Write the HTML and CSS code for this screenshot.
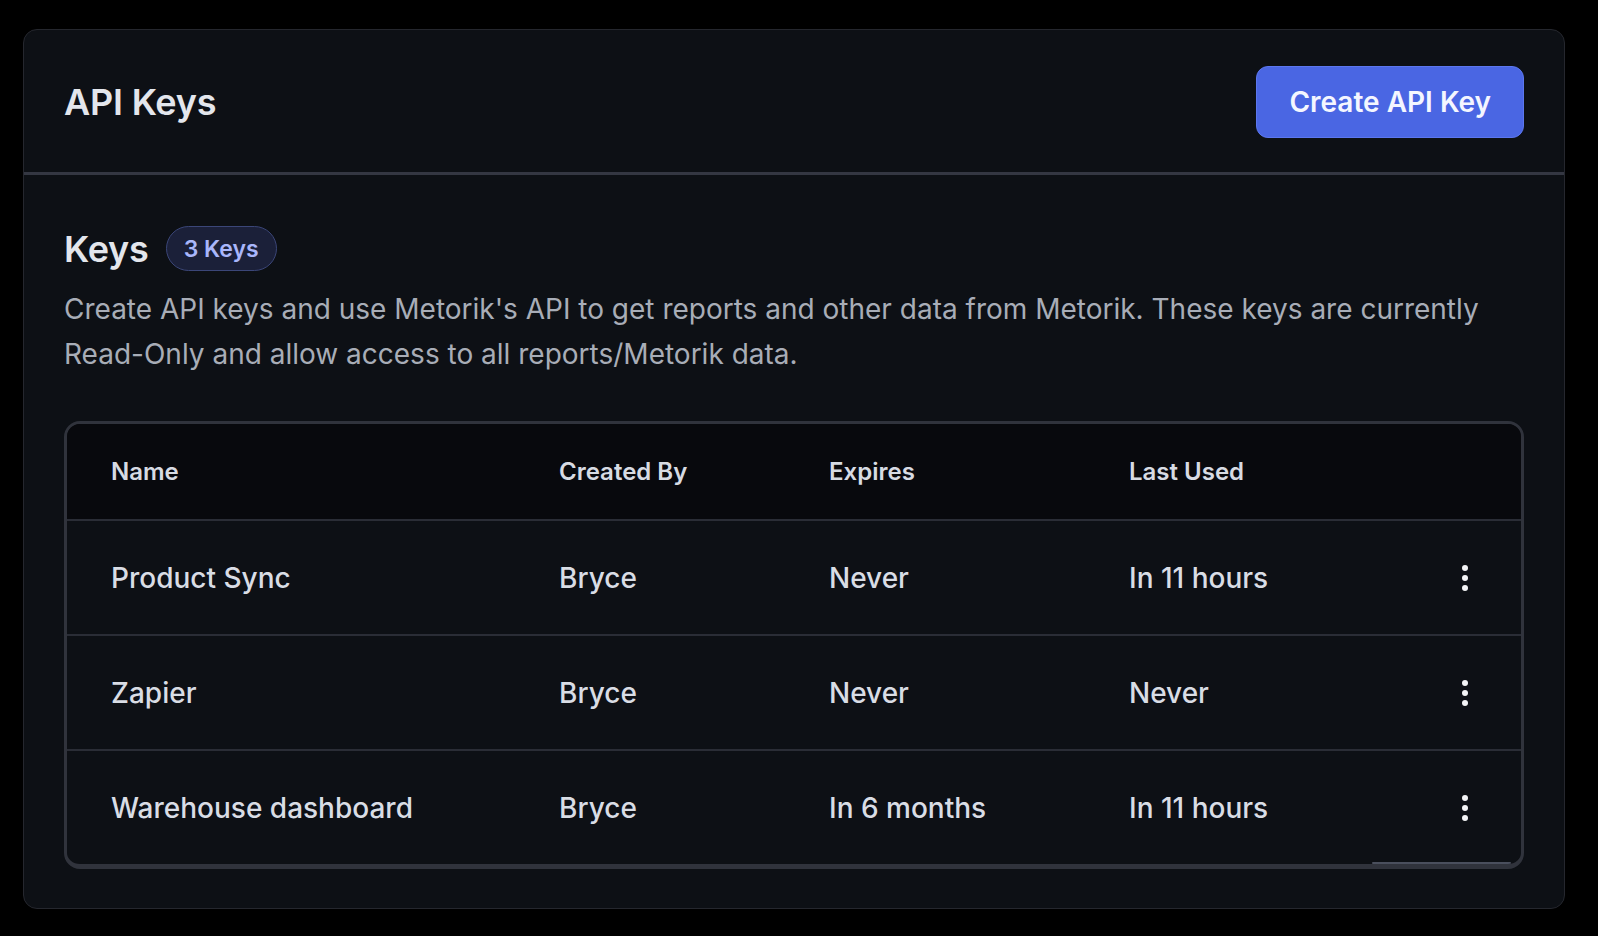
FILE: index.html
```html
<!DOCTYPE html>
<html lang="en">
<head>
<meta charset="utf-8">
<title>API Keys</title>
<link rel="stylesheet" href="styles.css">
</head>
<body>
<div class="page">
  <section class="card">
    <header class="card-header">
      <h1 class="title">API Keys</h1>
      <button class="btn-primary" type="button">Create API Key</button>
    </header>
    <div class="card-body">
      <div class="section-head">
        <h2 class="section-title">Keys</h2>
        <span class="badge">3 Keys</span>
      </div>
      <p class="description">Create API keys and use Metorik's API to get reports and other data from Metorik. These keys are currently <span class="nobreak">Read-Only</span> and allow access to all reports/Metorik data.</p>
      <div class="table">
        <div class="row head-row">
          <div class="cell">Name</div>
          <div class="cell">Created By</div>
          <div class="cell">Expires</div>
          <div class="cell">Last Used</div>
          <div class="cell"></div>
        </div>
        <div class="row">
          <div class="cell">Product Sync</div>
          <div class="cell">Bryce</div>
          <div class="cell">Never</div>
          <div class="cell">In 11 hours</div>
          <div class="cell menu"><svg width="8" height="28" viewBox="0 0 8 28"><circle cx="4" cy="4" r="3"/><circle cx="4" cy="14" r="3"/><circle cx="4" cy="24" r="3"/></svg></div>
        </div>
        <div class="row">
          <div class="cell">Zapier</div>
          <div class="cell">Bryce</div>
          <div class="cell">Never</div>
          <div class="cell">Never</div>
          <div class="cell menu"><svg width="8" height="28" viewBox="0 0 8 28"><circle cx="4" cy="4" r="3"/><circle cx="4" cy="14" r="3"/><circle cx="4" cy="24" r="3"/></svg></div>
        </div>
        <div class="row">
          <div class="cell">Warehouse dashboard</div>
          <div class="cell">Bryce</div>
          <div class="cell">In 6 months</div>
          <div class="cell">In 11 hours</div>
          <div class="cell menu"><svg width="8" height="28" viewBox="0 0 8 28"><circle cx="4" cy="4" r="3"/><circle cx="4" cy="14" r="3"/><circle cx="4" cy="24" r="3"/></svg></div>
        </div>
        <div class="scroll-thumb"></div>
      </div>
    </div>
  </section>
</div>
</body>
</html>
```
FILE: styles.css
```css
* { box-sizing: border-box; }

html, body {
  margin: 0;
  padding: 0;
  background: #000;
}

body {
  font-family: Inter, "Noto Sans", "Liberation Sans", sans-serif;
  color: #e2e5eb;
}

.page {
  padding: 29px 33px 0 23px;
}

.card {
  background: #0d1015;
  border: 1px solid #25272e;
  border-radius: 14px;
  overflow: hidden;
}

.card-header {
  display: flex;
  align-items: center;
  justify-content: space-between;
  padding: 36px 40px 34px 40px;
  border-bottom: 3px solid #343742;
}

.title {
  margin: 0;
  font-size: 36px;
  font-weight: 600;
  letter-spacing: -0.2px;
  color: #e3e6ec;
  line-height: 44px;
}

.btn-primary {
  height: 72px;
  padding: 0 32px;
  background: #4a66e3;
  border: 1px solid #5c77ee;
  border-radius: 12px;
  color: #f4f6ff;
  font-family: inherit;
  font-size: 28px;
  font-weight: 600;
  cursor: pointer;
}

.card-body {
  padding: 51px 40px 39px 40px;
}

.section-head {
  display: flex;
  align-items: center;
  gap: 17px;
  height: 45px;
}

.section-title {
  margin: 0;
  font-size: 36px;
  font-weight: 600;
  letter-spacing: -0.2px;
  color: #e3e6ec;
  line-height: 44px;
}

.badge {
  display: inline-flex;
  align-items: center;
  height: 45px;
  padding: 0 17px;
  border: 1.5px solid #3b4678;
  background: #1b2039;
  border-radius: 999px;
  color: #a9b6fb;
  font-size: 23px;
  font-weight: 600;
}

.description {
  margin: 16px 0 0 0;
  font-size: 28px;
  line-height: 45px;
  color: #a8adb7;
}

.nobreak {
  white-space: nowrap;
}

.table {
  position: relative;
  margin-top: 44px;
  border: 3px solid #30333c;
  border-bottom-width: 5px;
  border-radius: 16px;
  overflow: hidden;
  background: #0d1015;
}

.row {
  display: grid;
  grid-template-columns: 448px 270px 300px 1fr 24px;
  align-items: center;
  padding: 0 44px 0 44px;
  height: 115px;
  border-top: 2px solid #2a2d36;
  font-size: 28px;
  font-weight: 500;
  color: #d9dde5;
}

.head-row {
  height: 95px;
  border-top: none;
  background: #08090d;
  font-size: 24px;
  font-weight: 600;
  color: #d7dbe3;
}

.cell {
  white-space: nowrap;
}

.menu {
  display: flex;
  justify-content: center;
  align-items: center;
}

.menu svg {
  fill: #f3f4f6;
  display: block;
}

.scroll-thumb {
  position: absolute;
  left: 1305px;
  right: 10px;
  bottom: 0;
  height: 2px;
  background: #4a4f5d;
  border-radius: 1px;
}
```
